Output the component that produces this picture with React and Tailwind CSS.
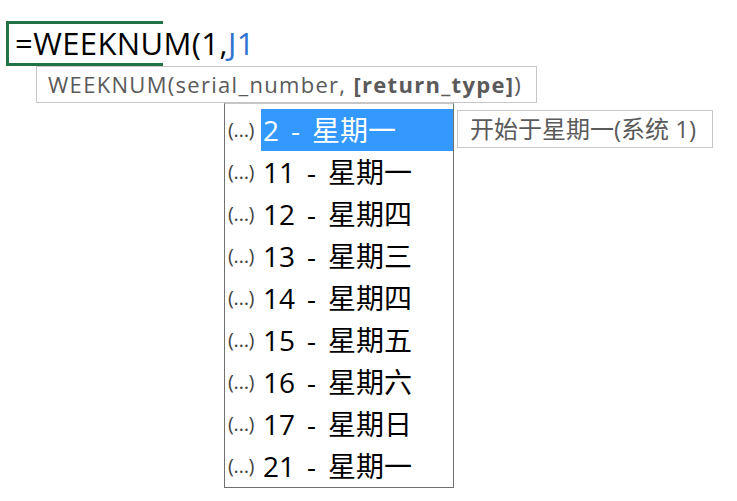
import React from "react";

const items = [
  ["2", "星期一"],
  ["11", "星期一"],
  ["12", "星期四"],
  ["13", "星期三"],
  ["14", "星期四"],
  ["15", "星期五"],
  ["16", "星期六"],
  ["17", "星期日"],
  ["21", "星期一"],
];

export default function App() {
  return (
    <div className="w-[737px] h-[501px] bg-white overflow-hidden pt-[21px] pl-[6px] font-['Open_Sans','Noto_Sans_CJK_SC',sans-serif]">
      {/* cell */}
      <div className="flex items-center w-[157px] h-[45px] border-t-[3px] border-b-[3px] border-l-[3px] border-[#217346] whitespace-nowrap">
        <span className="pl-[6px] text-[31px] leading-none text-black tracking-[0.4px]">
          =WEEKNUM(1,<span className="text-[#2f72d0]">J1</span>
        </span>
        <span className="ml-[2px] inline-block w-px h-[38px] bg-black" />
      </div>
      {/* syntax tooltip */}
      <div className="ml-[30px] w-[501px] h-[37px] border border-[#c6c6c6] flex items-center pl-[11px] text-[22px] tracking-[1.3px] text-[#5a5a5a] whitespace-nowrap">
        WEEKNUM(serial_number,&nbsp;<span className="font-bold">[return_type]</span>)
      </div>
      {/* dropdown + description */}
      <div className="flex items-start ml-[218px]">
        <div className="w-[230px] h-[385px] border-l border-r border-b border-t border-[#707070] border-t-[#c6c6c6] pt-[5px]">
          {items.map(([n, d], i) => (
            <div key={i} className="flex items-center h-[42px] whitespace-nowrap">
              <span className="w-[36px] pl-[3px] text-[20px] text-[#444] leading-none tracking-[-0.5px]">(…)</span>
              <span
                className={
                  "flex-1 h-[42px] flex items-center text-[28px] leading-none " +
                  (i === 0 ? "bg-[#3399ff] text-white" : "text-black")
                }
              >
                <span className="pl-[2px]">{n}</span>
                <span className="mx-[12px]">-</span>
                <span>{d}</span>
              </span>
            </div>
          ))}
        </div>
        <div className="ml-[3px] mt-[7px] w-[256px] h-[38px] border border-[#c6c6c6] flex items-center pl-[12px] text-[24px] text-[#5a5a5a] whitespace-nowrap">
          开始于星期一(系统 1)
        </div>
      </div>
    </div>
  );
}
